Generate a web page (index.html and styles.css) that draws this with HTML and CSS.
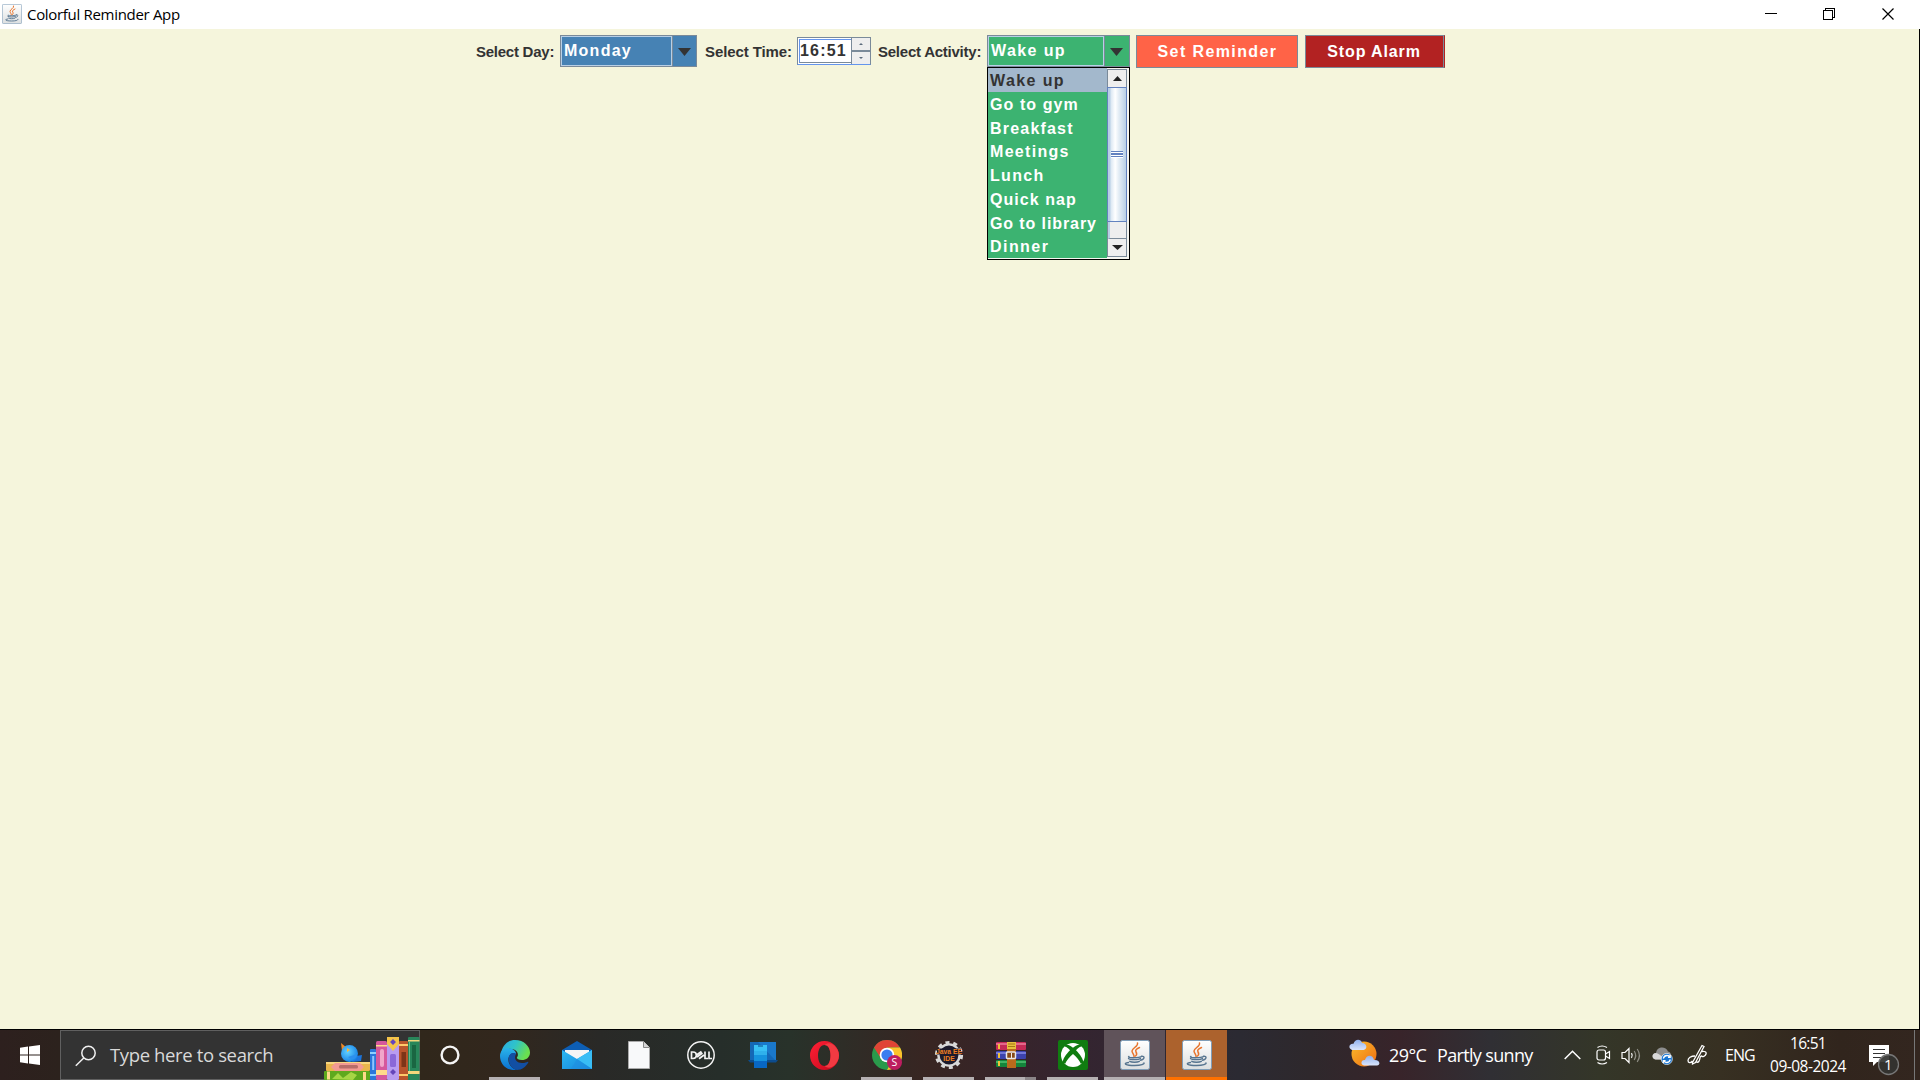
FILE: index.html
```html
<!DOCTYPE html>
<html lang="en">
<head>
<meta charset="utf-8">
<title>Colorful Reminder App</title>
<link rel="stylesheet" href="styles.css">
</head>
<body>
<svg width="0" height="0" class="defs">
  <defs>
    <linearGradient id="tile" x1="0" y1="0" x2="0" y2="1"><stop offset="0" stop-color="#fff"/><stop offset="1" stop-color="#dcdfe0"/></linearGradient>
    <linearGradient id="edgeTop" x1="0" y1="0" x2="1" y2="0.4"><stop offset="0" stop-color="#2aa8e8"/><stop offset=".5" stop-color="#2fc3c9"/><stop offset="1" stop-color="#6ae04f"/></linearGradient>
    <linearGradient id="edgeLeft" x1="0" y1="0" x2="0" y2="1"><stop offset="0" stop-color="#2ab4ea"/><stop offset="1" stop-color="#0a6fd0"/></linearGradient>
    <linearGradient id="mailFront" x1="0" y1="0" x2="1" y2="1"><stop offset="0" stop-color="#2cb8f2"/><stop offset="1" stop-color="#1686dc"/></linearGradient>
    <linearGradient id="operaRed" x1="0" y1="0" x2="1" y2="1"><stop offset="0" stop-color="#ff2035"/><stop offset="1" stop-color="#c4081c"/></linearGradient>
    <linearGradient id="sun" x1="0" y1="0" x2="1" y2="1"><stop offset="0" stop-color="#fbbd2c"/><stop offset="1" stop-color="#ee6c12"/></linearGradient>
    <linearGradient id="cloud" x1="0" y1="0" x2="0" y2="1"><stop offset="0" stop-color="#8fb0ee"/><stop offset="1" stop-color="#dbe6fc"/></linearGradient>
    <radialGradient id="bird" cx=".4" cy=".4" r=".6"><stop offset="0" stop-color="#63d2ff"/><stop offset="1" stop-color="#1a86e8"/></radialGradient>
    <symbol id="java" viewBox="0 0 30 30">
      <rect x=".5" y=".5" width="29" height="29" rx="2" fill="url(#tile)" stroke="#7f9db8"/>
      <path d="M17.500 3c1 3.500-5.500 5-5.500 8 0 2 2.500 3.500 2 5.500M19.500 7.500c-3 1.500-4.500 2.500-3.500 4.500 1 1.500 1 3-.5 4" fill="none" stroke="#e8742c" stroke-width="1.500" stroke-linecap="round"/>
      <path d="M9 16.500c-3 1.500 10 1.800 13-.3M8.500 18.500c1.500 1.500 10 1.500 12 0M9.800 21.300c2 1.200 7.500 1.200 9.500 0M21.500 16.200c3.500-.5 3.500 3-1 4M8.500 22.500c-6 1-3 3 6 3 7 0 10-1.300 9.500-2.600" fill="none" stroke="#56748f" stroke-width="1.400" stroke-linecap="round"/>
    </symbol>
  </defs>
</svg>

<div class="screen">
  <header class="titlebar">
    <svg class="app-icon" width="20" height="20"><use href="#java"/></svg>
    <h1 class="title">Colorful Reminder App</h1>
    <svg class="window-controls" width="130" height="29" viewBox="0 0 130 29" shape-rendering="crispEdges" fill="none" stroke="#000">
      <path d="M0 13.500h12M58.500 10.500h9v9h-9zM60.500 10v-1.500h9v9h-2"/>
      <path d="M117.500 8.500l11 11M128.500 8.500l-11 11" shape-rendering="auto" stroke-width="1.200"/>
    </svg>
  </header>

  <main class="content">
    <div class="toolbar">
      <span class="label label-day">Select Day:</span>
      <div class="combo combo-day">
        <div class="combo-value">Monday</div>
        <div class="combo-button"><svg width="13" height="8"><path d="M0 0h13L6.500 8z" fill="#333"/></svg></div>
      </div>
      <span class="label label-time">Select Time:</span>
      <div class="spinner">
        <div class="spinner-value">16:51</div>
        <div class="spinner-buttons">
          <div class="spin"><svg width="4" height="2"><path d="M0 2L2 0l2 2z" fill="#5b6b7c"/></svg></div>
          <div class="spin"><svg width="4" height="2"><path d="M0 0h4L2 2z" fill="#5b6b7c"/></svg></div>
        </div>
      </div>
      <span class="label label-activity">Select Activity:</span>
      <div class="combo combo-activity">
        <div class="combo-value wake">Wake up</div>
        <div class="combo-button"><svg width="13" height="8"><path d="M0 0h13L6.500 8z" fill="#333"/></svg></div>
        <div class="popup">
          <ul class="options">
            <li class="option selected wake">Wake up</li>
            <li class="option gym">Go to gym</li>
            <li class="option breakfast">Breakfast</li>
            <li class="option meetings">Meetings</li>
            <li class="option lunch">Lunch</li>
            <li class="option nap">Quick nap</li>
            <li class="option library">Go to library</li>
            <li class="option dinner">Dinner</li>
          </ul>
          <div class="scrollbar">
            <div class="scroll-arrow"><svg width="9" height="5"><path d="M0 5L4.500 0 9 5z" fill="#222"/></svg></div>
            <div class="thumb"><i class="grip"></i></div>
            <div class="track"></div>
            <div class="scroll-arrow"><svg width="11" height="5"><path d="M0 0h11L5.500 5z" fill="#222"/></svg></div>
          </div>
        </div>
      </div>
      <button class="action set">Set Reminder</button>
      <button class="action stop">Stop Alarm</button>
    </div>
  </main>

  <footer class="taskbar">
    <div class="start">
      <svg width="20" height="20" viewBox="0 0 20 20" fill="#fff"><path d="M0 2.700L8 1.500V9.400H0zM9 1.400L20 0V9.400H9zM0 10.500H8V18.400L0 17.300zM9 10.500H20V20L9 18.600z"/></svg>
    </div>
    <div class="search">
      <svg width="22" height="22" viewBox="0 0 22 22" fill="none" stroke="#f0f0f0" stroke-width="1.500"><circle cx="13.500" cy="8" r="6.700"/><path d="M9 12.800L.8 20.800"/></svg>
      <span class="search-text">Type here to search</span>
      <svg class="books" width="96" height="44" viewBox="0 0 96 44">
        <rect x="2" y="26" width="44" height="9" rx="1" fill="#e9b54c"/><rect x="2" y="26" width="44" height="2" fill="#f8d67f"/>
        <path d="M11 27h25l4 4-4 4H11l-4-4z" fill="#f39a92"/><rect x="15" y="29" width="19" height="3.500" rx="1.500" fill="#b96d68"/>
        <rect x="0" y="35" width="46" height="9" rx="1" fill="#5fa91e"/><path d="M8 43l6-6 5 5 8-6 6 3-4 5z" fill="#a6d645"/><path d="M3 35.500h3v8H3zM39 36h3v8h-3z" fill="#ffd98a"/>
        <path d="M17 7l6 5-5 3z" fill="#f08a24"/><path d="M32 20l6-1-1 6-9 1z" fill="#1b74dc"/><circle cx="25.500" cy="17.500" r="8.500" fill="url(#bird)"/><path d="M23 12l3 2-3 2z" fill="#ffb638"/><path d="M24 21c5 5 9 1 9-3" fill="#2c90ef"/>
        <rect x="46" y="13" width="6" height="31" rx="1" fill="#2b76da"/><path d="M46 16h6v2h-6zM46 38h6v2h-6z" fill="#8ed0ff"/><rect x="48.200" y="20" width="2" height="14" fill="#8fc4ff"/>
        <rect x="52" y="5" width="11" height="39" rx="1.500" fill="#d5589c"/><path d="M52 9h11v1.500H52zM52 34h11v5H52z" fill="#ffd98a"/><rect x="56" y="13" width="4" height="18" rx="2" fill="#f1a6c9"/>
        <rect x="63" y="1" width="12" height="43" rx="1.500" fill="#b89cf0"/><path d="M63 1h12v7l-6 7-6-7z" fill="#f4c449"/><path d="M69 3l3 3-3 3-3-3zM69 33l3 3-3 3-3-3z" fill="#6546bb"/><rect x="66" y="18" width="6" height="13" rx="1.500" fill="#8a68d8"/>
        <rect x="75" y="5" width="9" height="39" rx="1" fill="#b9552b"/><path d="M75 8h9v2h-9zM75 38h9v2h-9z" fill="#ffc969"/><rect x="77.500" y="16" width="4.500" height="15" fill="#7d3518"/>
        <rect x="84" y="1" width="11.500" height="43" rx="1" fill="#28865a"/><path d="M84 4h11.500v1.500H84zM84 35h11.500v3H84z" fill="#f2d67c"/><rect x="88" y="9" width="4" height="23" fill="#1a6642"/><path d="M85.500 6v29" stroke="#65bb8d"/>
      </svg>
    </div>
    <div class="slot cortana"><svg width="20" height="20"><circle cx="10" cy="10" r="8.400" fill="none" stroke="#f4f4f4" stroke-width="2.400"/></svg></div>

    <div class="slot open">
      <svg width="30" height="30" viewBox="0 0 30 30">
        <path d="M1 14C2 5 8 0 15 0c9 0 15 6.500 15 12.500 0 5-4 7.500-8 7.500-4 0-6-1.500-4.800-3 1.500-2 .8-6-3.200-7.500C8 7.500 2 10 1 14z" fill="url(#edgeTop)"/>
        <path d="M0 16C0 9.500 6 6.500 11 8.500c3.500 1.200 5.500 3.500 5 6C14 12 9.500 13 8.500 18c-1 6 4 11.500 8.500 11.800C7 31.500 0 24.500 0 16z" fill="url(#edgeLeft)"/>
        <path d="M8.700 17.500c.3-3.500 3.500-5.500 6.800-4.200.7.400.3 1.200-.1 2.200-1.500 4 2 7.500 6.600 7.500 3 0 4.500-.8 5.800-1.300.6-.2.800.3.500.8C26 26.500 22 30 17 30 12 29 8 24 8.700 17.500z" fill="#124fa3"/>
      </svg>
    </div>
    <div class="slot">
      <svg width="30" height="28" viewBox="0 0 30 28"><path d="M0 9L15 0l15 9v5H0z" fill="#0d5eb4"/><path d="M3 9h24v8l-12 5L3 15z" fill="#f5f5f5"/><path d="M0 9l15 9 15-9v19H0z" fill="url(#mailFront)"/><path d="M15 18L30 9v19z" fill="#39bdf5"/><path d="M15 18L30 28H9z" fill="#1f8ee0" opacity=".6"/></svg>
    </div>
    <div class="slot">
      <svg width="22" height="28" viewBox="0 0 22 28"><path d="M.5.500h15l6 6v21H.5z" fill="#f8f9fa" stroke="#aaa"/><path d="M15.500.500v6h6" fill="#d5d5d5" stroke="#888"/></svg>
    </div>
    <div class="slot">
      <svg width="28" height="28" viewBox="0 0 28 28" fill="none" stroke="#f3f3f3"><circle cx="14" cy="14" r="13.200" stroke-width="1.500"/><path d="M4.500 11v6.500h1.500c4.500 0 4.500-6.500 0-6.500zM9.500 14l5-3.500M10 16l5.500-4M12 17.800l5-3.800M18 10.500v7h3M22 10.500v7h3" stroke-width="1.700"/></svg>
    </div>
    <div class="slot">
      <svg width="30" height="28" viewBox="0 0 30 28"><path d="M2 1h26v19H2z" fill="#1467b6"/><path d="M10 1h18v19z" fill="#1a78ca"/><path d="M0 19h30l-2 2.500H2z" fill="#0c4c8e"/><path d="M6 4h13v6H6z" fill="#38c0f5"/><path d="M6 10h13v5H6z" fill="#2fb1ec"/><path d="M6 14h13v6H6z" fill="#1593df"/><path d="M6 20h13v7H6z" fill="#0867c4"/><path d="M10 5h5" stroke="#094b8c"/></svg>
    </div>
    <div class="slot">
      <svg width="29" height="29" viewBox="0 0 29 29"><path d="M14.500 0a14.500 14.500 0 1 0 0 29 14.500 14.500 0 1 0 0-29zM14.500 4c4 0 6 4.700 6 10.500S18.500 25 14.500 25 8 20.300 8 14.500 10.500 4 14.500 4z" fill="url(#operaRed)" fill-rule="evenodd"/><path d="M14.500 4c3-2.500 7-2 9.500.300C27 7 29 10.500 29 14.500S27 22 24 24.700c-3 2.300-6.500 2.800-9.500.300 4 0 6-4.700 6-10.500S18.500 4 14.500 4z" fill="#f23a42"/></svg>
    </div>
    <div class="slot open">
      <svg width="30" height="30" viewBox="0 0 30 30"><circle cx="15" cy="15" r="15" fill="#2a9a4b"/><path d="M2 7.500A15 15 0 0 1 28 7.500H15L9 18.500z" fill="#e04435"/><path d="M28 7.500A15 15 0 0 1 15 30l6.500-11.200c1.500-4 0-8-6.500-11.300z" fill="#fbc32b"/><circle cx="15" cy="15" r="7.300" fill="#fff"/><circle cx="15" cy="15" r="5.600" fill="#3a7df0"/><circle cx="22.500" cy="22.500" r="7.500" fill="#bd1d60"/><text x="22.500" y="26.300" class="profile">S</text></svg>
    </div>
    <div class="slot open">
      <svg width="30" height="30" viewBox="0 0 30 30" overflow="visible"><circle cx="15" cy="15" r="12.600" fill="none" stroke="#d9d9d9" stroke-width="3" stroke-dasharray="4 3.920"/><circle cx="15" cy="15" r="10.600" fill="#1c1a2c" stroke="#d9d9d9" stroke-width="2.400"/><rect x="3" y="8.500" width="24" height="6" fill="#1c1a2c"/><text x="15" y="14" class="ide">Java EE</text><text x="15" y="21" class="ide">IDE</text></svg>
    </div>
    <div class="slot open stacked">
      <svg width="30" height="26" viewBox="0 0 30 26"><rect y="0" width="30" height="8" rx="1" fill="#c52b57"/><rect y="1" width="30" height="2" fill="#e2688a"/><rect y="9" width="30" height="8" rx="1" fill="#3c43ad"/><rect y="10" width="30" height="2" fill="#7378d8"/><rect y="18" width="30" height="7" rx="1" fill="#14853b"/><rect y="19" width="30" height="2" fill="#43b365"/><path d="M2 2h2v5H2zM2 11h2v5H2zM2 19h2v5H2z" fill="#f0c23a"/><rect x="11" y="0" width="9" height="26" fill="#b86a1c"/><rect x="11" width="9" height="7" fill="#e8bf3d"/><path d="M12 2h7M12 4.500h7" stroke="#a57915"/><rect x="10.500" y="10" width="9" height="6.500" rx="1" fill="#864a18" stroke="#e8e8e8" stroke-width="1.500"/><path d="M15.500 11v5" stroke="#eee"/></svg>
    </div>
    <div class="slot open">
      <svg width="30" height="30" viewBox="0 0 30 30"><rect width="30" height="30" rx="2" fill="#107c10"/><circle cx="15" cy="15" r="12" fill="#fff"/><path d="M7 5c3-1 6 1.200 8 2.700C17 6.200 20 4 23 5l.5 1.500C21 7 19.500 8.700 18 10.200c4 4 7.500 9 7.300 12.500l-2.500 1C21.500 20.500 18.500 17 15 14c-3.500 3-6.500 6.500-7.800 9.700l-2.500-1C4.500 19.200 8 14.200 12 10.200 10.500 8.700 9 7 6.500 6.500z" fill="#107c10"/></svg>
    </div>
    <div class="slot open active"><svg width="30" height="30"><use href="#java"/></svg></div>
    <div class="slot open alert"><svg width="30" height="30"><use href="#java"/></svg></div>

    <div class="tray">
      <svg class="weather" width="31" height="30" viewBox="0 0 31 30"><circle cx="15" cy="15" r="12.500" fill="url(#sun)"/><path d="M3 11C-1.500 9 .5 4 4.500 4.800 6-.5 12-.5 13 4c5 0 6 6 1.500 7z" fill="url(#cloud)"/><path d="M15 26.500c-4-1-3-6 1-5.500 1.500-6 8-5.500 9 0 6-.5 7 5 3 5.500z" fill="url(#cloud)"/></svg>
      <span class="temp">29°C</span>
      <span class="condition">Partly sunny</span>
      <svg class="chevron" width="17" height="10" fill="none" stroke="#fff" stroke-width="1.500"><path d="M.7 9l7.800-7.800L16.300 9"/></svg>
      <svg class="camera" width="15" height="20" fill="none" stroke="#fff" stroke-width="1.200"><rect x="1" y="5" width="8.500" height="10" rx="2"/><path d="M9.500 9l4-2.500v7l-4-2.500M1.500 2.500q4.500-3 9.500 0M1.500 17.500q4.500 3 9.500 0"/></svg>
      <svg class="speaker" width="22" height="17" fill="none" stroke="#fff" stroke-width="1.200"><path d="M1 5.500h3l4-4v14l-4-4H1zM10.500 6.200q1.500 2.300 0 4.600"/><path d="M13.200 4q3 4.500 0 9M16.200 2q4.500 6.500 0 13" stroke="#8d8d84"/></svg>
      <svg class="onedrive" width="21" height="18"><path d="M3.500 12.500C-1 11.500 0 6 4 6 5-1 14-1 16 4.500c3 .5 4 4 3 8z" fill="#8d8d8d"/><path d="M3.500 12.500C-1 11.500 0 6 4 6q3 0 9 6.500z" fill="#d9d9d9"/><circle cx="14.800" cy="12" r="5.600" fill="#1674d2" stroke="#fff" stroke-width=".6"/><path d="M11.300 11.500q.8-3 3.700-3 2 0 3 1.800M18.300 12.500q-.8 3-3.700 3-2 0-3-1.800M18.200 8v2.300H16M11.300 16v-2.300h2.300" fill="none" stroke="#fff" stroke-width="1.300"/></svg>
      <svg class="pen" width="21" height="21" fill="none" stroke="#fff" stroke-width="1.300"><path d="M5.500 18.500L15 1.500l2 1-8.500 16-3 1.500zM8 12c-4 0-7 2-7 4.500S3.500 19.500 5.500 17M9.500 18c2 1 3-1 3.500-4s2-2 2.500-1M15 7.500c6-1 5 4 .5 5.500"/></svg>
      <span class="lang">ENG</span>
      <div class="clock"><span class="time">16:51</span><span class="date">09-08-2024</span></div>
      <svg class="notice" width="31" height="31" viewBox="0 0 31 31"><path d="M0 0h20v17H8l-4 4v-4H0z" fill="#fff"/><path d="M4 4.500h12M4 8.500h12M4 12.500h8" stroke="#333"/><circle cx="19.500" cy="19.500" r="10" fill="#333331" fill-opacity=".92" stroke="#777" stroke-width="1.300"/><text x="19.300" y="25" class="badge">1</text></svg>
      <i class="peek"></i>
    </div>
  </footer>
</div>
</body>
</html>
```
FILE: styles.css
```css
* { box-sizing: border-box; }

body {
  margin: 0;
  overflow: hidden;
  font-family: "Open Sans", "Noto Sans", sans-serif;
}

svg { display: block; flex: none; }
.defs { position: absolute; }

.screen {
  display: flex;
  flex-direction: column;
  width: 1920px;
  height: 1080px;
}

/* Window frame */
.titlebar {
  display: flex;
  height: 29px;
  padding-left: 2px;
  background: #fff;
}
.app-icon { margin-top: 4px; }
.title {
  margin: 0 auto 0 5px;
  font-size: 15px;
  font-weight: 400;
  line-height: 29px;
  letter-spacing: -0.31px;
  white-space: nowrap;
  color: #000;
}
.window-controls { margin-right: 25px; }

.content {
  flex: 1;
  background: #f5f5dc;
  border-right: 1px solid #000;
  border-bottom: 1px solid #000;
}

.toolbar {
  display: flex;
  align-items: flex-start;
  padding: 6px 0 0 476px;
  font: bold 16px "Liberation Sans", Arial, sans-serif;
}
.label {
  font-size: 15px;
  line-height: 33px;
  color: #333;
  white-space: nowrap;
}
.label-day { width: 84px; letter-spacing: -0.25px; }
.label-time { width: 92px; margin-left: 8px; letter-spacing: -0.1px; }
.label-activity { width: 109px; margin-left: 7px; letter-spacing: -0.24px; }

/* Combo boxes */
.combo {
  position: relative;
  display: flex;
  height: 32px;
  border: 1px solid #7a8a99;
  color: #fff;
}
.combo-day { width: 137px; background: #4682b4; letter-spacing: 1.25px; }
.combo-activity { width: 143px; background: #3cb371; }
.combo-value {
  flex: 1;
  border: 1px solid #b8cfe5;
  padding-left: 2px;
  line-height: 27px;
  white-space: nowrap;
}
.combo-button {
  display: flex;
  width: 24px;
  padding: 12px 0 0 5px;
  border-left: 1px solid #7a8a99;
}
.combo-activity .combo-button { width: 25px; }

/* Time spinner */
.spinner {
  display: flex;
  width: 74px;
  height: 28px;
  margin-top: 2px;
  border: 1px solid #7a8a99;
  border-bottom: 1px solid #6495ed;
  background: #fff;
}
.spinner-value {
  flex: 1;
  margin: 1px 0 1px 1px;
  border: 1px solid #6495ed;
  border-right: 0;
  border-bottom: 1px solid #7a8a99;
  line-height: 22px;
  letter-spacing: 1.2px;
  color: #333;
}
.spinner-buttons {
  display: flex;
  flex-direction: column;
  width: 19px;
  border-left: 1px solid #7a8a99;
  background: #eee;
}
.spin {
  display: flex;
  flex: 1;
  align-items: center;
  justify-content: center;
}
.spin + .spin { border-top: 2px solid #7a8a99; }

/* Activity list */
.popup {
  position: absolute;
  top: 31px;
  left: -1px;
  display: flex;
  width: 143px;
  height: 193px;
  border: 1px solid #000;
  background: #f5f5f0;
}
.options {
  flex: 1;
  margin: 0 0 1px;
  padding: 0;
  list-style: none;
  background: #3cb371;
}
.option {
  height: 23.75px;
  padding-left: 2px;
  line-height: 26px;
  white-space: nowrap;
}
.option.selected { background: #a3b8cc; color: #333; }
.wake { letter-spacing: 1.4px; }
.gym { letter-spacing: 1.08px; }
.breakfast { letter-spacing: 1.2px; }
.meetings { letter-spacing: 1.3px; }
.lunch { letter-spacing: 1.3px; }
.nap { letter-spacing: 1.05px; }
.library { letter-spacing: 0.9px; }
.dinner { letter-spacing: 1.45px; }

.scrollbar {
  display: flex;
  flex-direction: column;
  width: 20px;
  margin: 1px 2px 2px 0;
  border: 1px solid #7a8a99;
  background: #eee;
}
.scroll-arrow {
  display: flex;
  height: 17px;
  align-items: center;
  justify-content: center;
}
.thumb {
  display: flex;
  height: 135px;
  align-items: center;
  justify-content: center;
  margin: 0 -1px;
  border: 1px solid #6382bf;
  background: linear-gradient(90deg, #b8cfe5 0 2px, #dce8f3 3px, #fff 40%, #e4edf5 60%, #b8cfe5);
}
.grip {
  width: 12px;
  height: 7px;
  background: linear-gradient(#6382bf 0 1px, #fff 1px 2px, #6382bf 2px 4px, #fff 4px 5px, #6382bf 5px 6px, #fff 6px);
}
.track {
  flex: 1;
  border-left: 2px solid #b8cfe5;
  border-bottom: 1px solid #7a8a99;
}

/* Action buttons */
.action {
  height: 33px;
  padding: 0;
  border: 1px solid #7a8a99;
  font: inherit;
  color: #fff;
  white-space: nowrap;
}
.set { width: 162px; margin-left: 6px; padding-left: 1px; background: #ff6347; letter-spacing: 1.4px; }
.stop { width: 140px; margin-left: 7px; padding-right: 2px; background: #b22222; letter-spacing: 0.88px; border-right: 1px solid #b22222; box-shadow: inset -1px 0 #7a8a99; }

/* Taskbar */
.taskbar {
  display: flex;
  height: 50px;
  color: #fff;
  background: linear-gradient(90deg, #2d201e 0, #2c221d 60px, #30271b 420px, #32271d 500px, #292927 600px, #262e2a 720px, #28322a 790px, #382522 930px, #352430 1070px, #2b2a32 1240px, #2e282c 1310px, #38242a 1400px, #302f34 1490px, #343628 1600px, #373022 1720px, #31251d 1840px, #33261f 1920px);
}
.start { display: flex; width: 60px; padding: 15px 0 0 20px; }
.search {
  display: flex;
  width: 360px;
  height: 50px;
  padding-left: 14px;
  border: 1px solid #606060;
  background: #333;
}
.search > svg:first-child { margin-top: 14px; }
.search-text {
  width: 213px;
  margin-left: 13px;
  font-size: 18.5px;
  line-height: 47px;
  letter-spacing: -0.37px;
  white-space: nowrap;
  color: #d9d9d9;
}
.books { margin: 5px -1px 0 auto; }

.slot {
  display: flex;
  width: 61px;
  margin-right: 1px;
  align-items: center;
  justify-content: center;
}
.slot.cortana { width: 60px; margin-right: 4px; }
.slot.open {
  background: linear-gradient(#b5b0b2, #b5b0b2) 5px bottom / 51px 3px no-repeat;
}
.slot.stacked {
  background: linear-gradient(90deg, #b5b0b2 40px, #8b8588 40px) 5px bottom / 51px 3px no-repeat;
}
.slot.active { background: linear-gradient(#60535a 47px, #b5b0b2 47px); }
.slot.alert { background: linear-gradient(#ac622d 47px, #ff7100 47px); }

.profile { font-size: 10.5px; text-anchor: middle; fill: #fff; }
.ide { font: bold 6.8px "Liberation Sans", Arial, sans-serif; text-anchor: middle; fill: #f08022; }

/* Notification area */
.tray {
  display: flex;
  flex: 1;
  margin-left: 121px;
  white-space: nowrap;
}
.weather { margin-top: 9px; }
.temp { width: 48px; margin-left: 9px; font-size: 18px; line-height: 50px; letter-spacing: -0.6px; }
.condition { width: 127px; font-size: 18px; line-height: 50px; letter-spacing: -0.66px; }
.chevron { margin-top: 20px; }
.camera { margin: 15px 0 0 15px; }
.speaker { margin: 17px 0 0 10px; }
.onedrive { margin: 17px 0 0 9px; }
.pen { margin: 14px 0 0 14px; }
.lang { width: 40px; margin-left: 17px; font-size: 16px; line-height: 50px; letter-spacing: -1px; }
.clock {
  display: flex;
  flex-direction: column;
  align-items: center;
  width: 86px;
  padding-top: 2px;
  font-size: 15.5px;
  line-height: 23px;
}
.time { letter-spacing: -0.7px; }
.date { letter-spacing: -0.5px; }
.notice { margin: 15px 0 0 18px; }
.badge { font-size: 15px; text-anchor: middle; fill: #fff; }
.peek { width: 1px; margin-left: 14px; background: #777; }
```
